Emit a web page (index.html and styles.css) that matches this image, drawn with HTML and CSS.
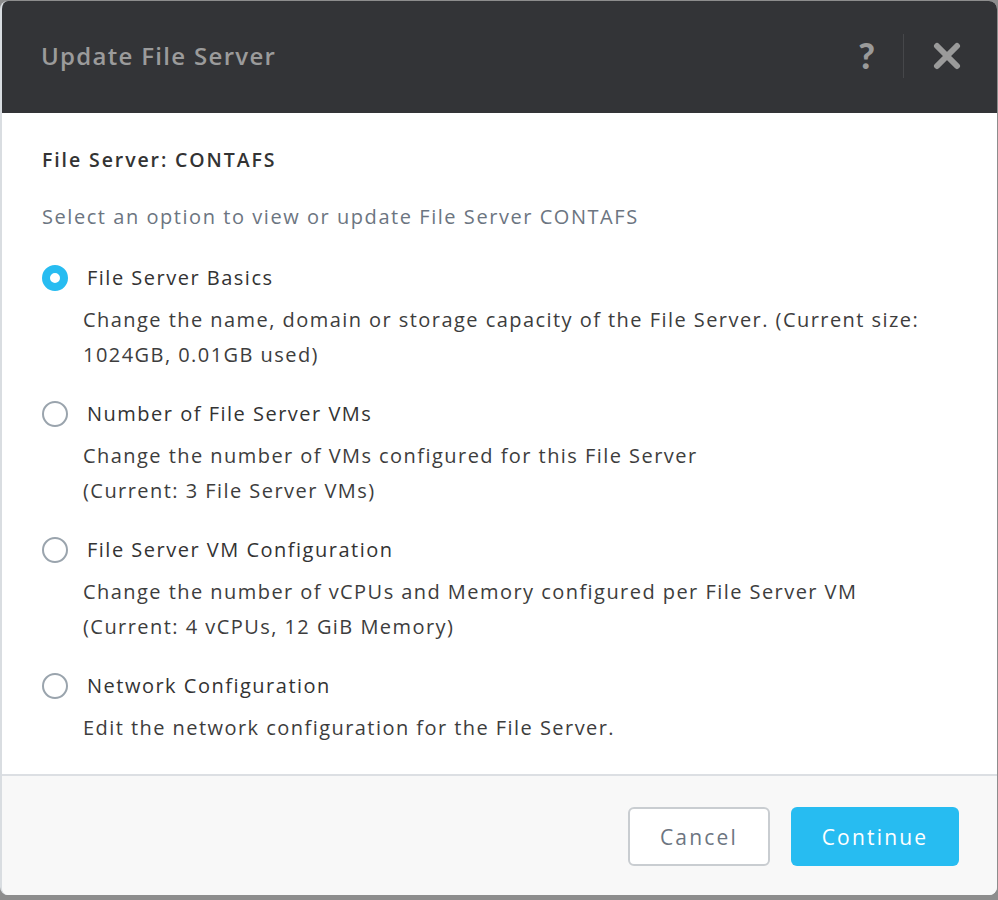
FILE: index.html
```html
<!DOCTYPE html>
<html>
<head>
<meta charset="utf-8">
<link rel="stylesheet" href="styles.css">
</head>
<body>
<div class="dialog">
  <div class="header">
    <div class="title">Update File Server</div>
    <div class="actions">
      <span class="help">?</span>
      <span class="divider"></span>
      <svg class="close" width="28" height="28" viewBox="0 0 28 28"><path d="M4 4 L24 24 M24 4 L4 24" stroke="#9a9a9a" stroke-width="6" stroke-linecap="round"/></svg>
    </div>
  </div>
  <div class="body">
    <div class="server">File Server: CONTAFS</div>
    <div class="subtitle">Select an option to view or update File Server CONTAFS</div>
    <div class="option">
      <span class="radio checked"></span>
      <div class="opt-text">
        <div class="label">File Server Basics</div>
        <div class="desc">Change the name, domain or storage capacity of the File Server. (Current size: 1024GB, 0.01GB used)</div>
      </div>
    </div>
    <div class="option">
      <span class="radio"></span>
      <div class="opt-text">
        <div class="label">Number of File Server VMs</div>
        <div class="desc">Change the number of VMs configured for this File Server<br>(Current: 3 File Server VMs)</div>
      </div>
    </div>
    <div class="option">
      <span class="radio"></span>
      <div class="opt-text">
        <div class="label">File Server VM Configuration</div>
        <div class="desc">Change the number of vCPUs and Memory configured per File Server VM<br>(Current: 4 vCPUs, 12 GiB Memory)</div>
      </div>
    </div>
    <div class="option">
      <span class="radio"></span>
      <div class="opt-text">
        <div class="label">Network Configuration</div>
        <div class="desc">Edit the network configuration for the File Server.</div>
      </div>
    </div>
  </div>
  <div class="footer">
    <button class="btn cancel">Cancel</button>
    <button class="btn primary">Continue</button>
  </div>
</div>
</body>
</html>
```
FILE: styles.css
```css
html, body {
  margin: 0;
  padding: 0;
  background: #8d8d8d;
  height: 900px;
  overflow: hidden;
}
body {
  font-family: "Open Sans", Lato, sans-serif;
}
.dialog {
  margin-top: 1px;
  width: 995px;
  height: 894px;
  background: #fff;
  border-left: 2px solid #d9dde1;
  border-radius: 8px;
  overflow: hidden;
  display: flex;
  flex-direction: column;
}
.header {
  height: 112px;
  flex: none;
  background: #333437;
  display: flex;
  align-items: center;
  justify-content: space-between;
  padding: 0 36px 0 39px;
}
.title {
  color: #9b9b9b;
  font-size: 24px;
  font-weight: 600;
  letter-spacing: 1.3px;
  margin-top: -3px;
}
.actions {
  display: flex;
  align-items: center;
}
.help {
  font-family: Lato, sans-serif;
  color: #9a9a9a;
  font-size: 36px;
  font-weight: 900;
  margin-right: 28px;
  margin-top: -4px;
}
.divider {
  width: 1px;
  height: 44px;
  background: #46474a;
  margin-right: 29px;
  margin-top: -2px;
}
.close {
  display: block;
  margin-top: -2px;
}
.body {
  flex: 1;
  padding: 33px 0 0 40px;
  color: #333;
}
.server {
  font-size: 19.5px;
  font-weight: 600;
  letter-spacing: 1.9px;
  color: #333;
  line-height: 28px;
}
.subtitle {
  margin-top: 29px;
  font-size: 20px;
  letter-spacing: 1.55px;
  color: #6c7581;
  line-height: 28px;
}
.option {
  display: flex;
  align-items: flex-start;
  margin-top: 33px;
}
.option + .option {
  margin-top: 28px;
}
.radio {
  flex: none;
  box-sizing: border-box;
  width: 26px;
  height: 26px;
  border-radius: 50%;
  border: 2px solid #9aa4ad;
  margin-top: 1px;
  margin-right: 19px;
}
.radio.checked {
  border: 8px solid #27bcf1;
}
.label {
  font-size: 20px;
  letter-spacing: 1.5px;
  line-height: 28px;
  color: #333;
}
.desc {
  font-size: 20px;
  letter-spacing: 1.45px;
  line-height: 35px;
  color: #3d3d3d;
  margin-left: -4px;
  margin-top: 10px;
  width: 880px;
}
.footer {
  flex: none;
  height: 121px;
  box-sizing: border-box;
  border-top: 2px solid #dcdfe3;
  background: #f8f8f8;
  display: flex;
  justify-content: flex-end;
  align-items: flex-start;
  padding: 31px 38px 0 0;
  gap: 21px;
}
.btn {
  font-family: "Open Sans", Lato, sans-serif;
  font-size: 21px;
  letter-spacing: 2.2px;
  height: 59px;
  border-radius: 6px;
  cursor: pointer;
}
.cancel {
  width: 142px;
  background: #fff;
  border: 2px solid #c9cdd1;
  color: #6c7581;
}
.primary {
  width: 168px;
  background: #27bcf1;
  border: none;
  color: #fff;
}
```
